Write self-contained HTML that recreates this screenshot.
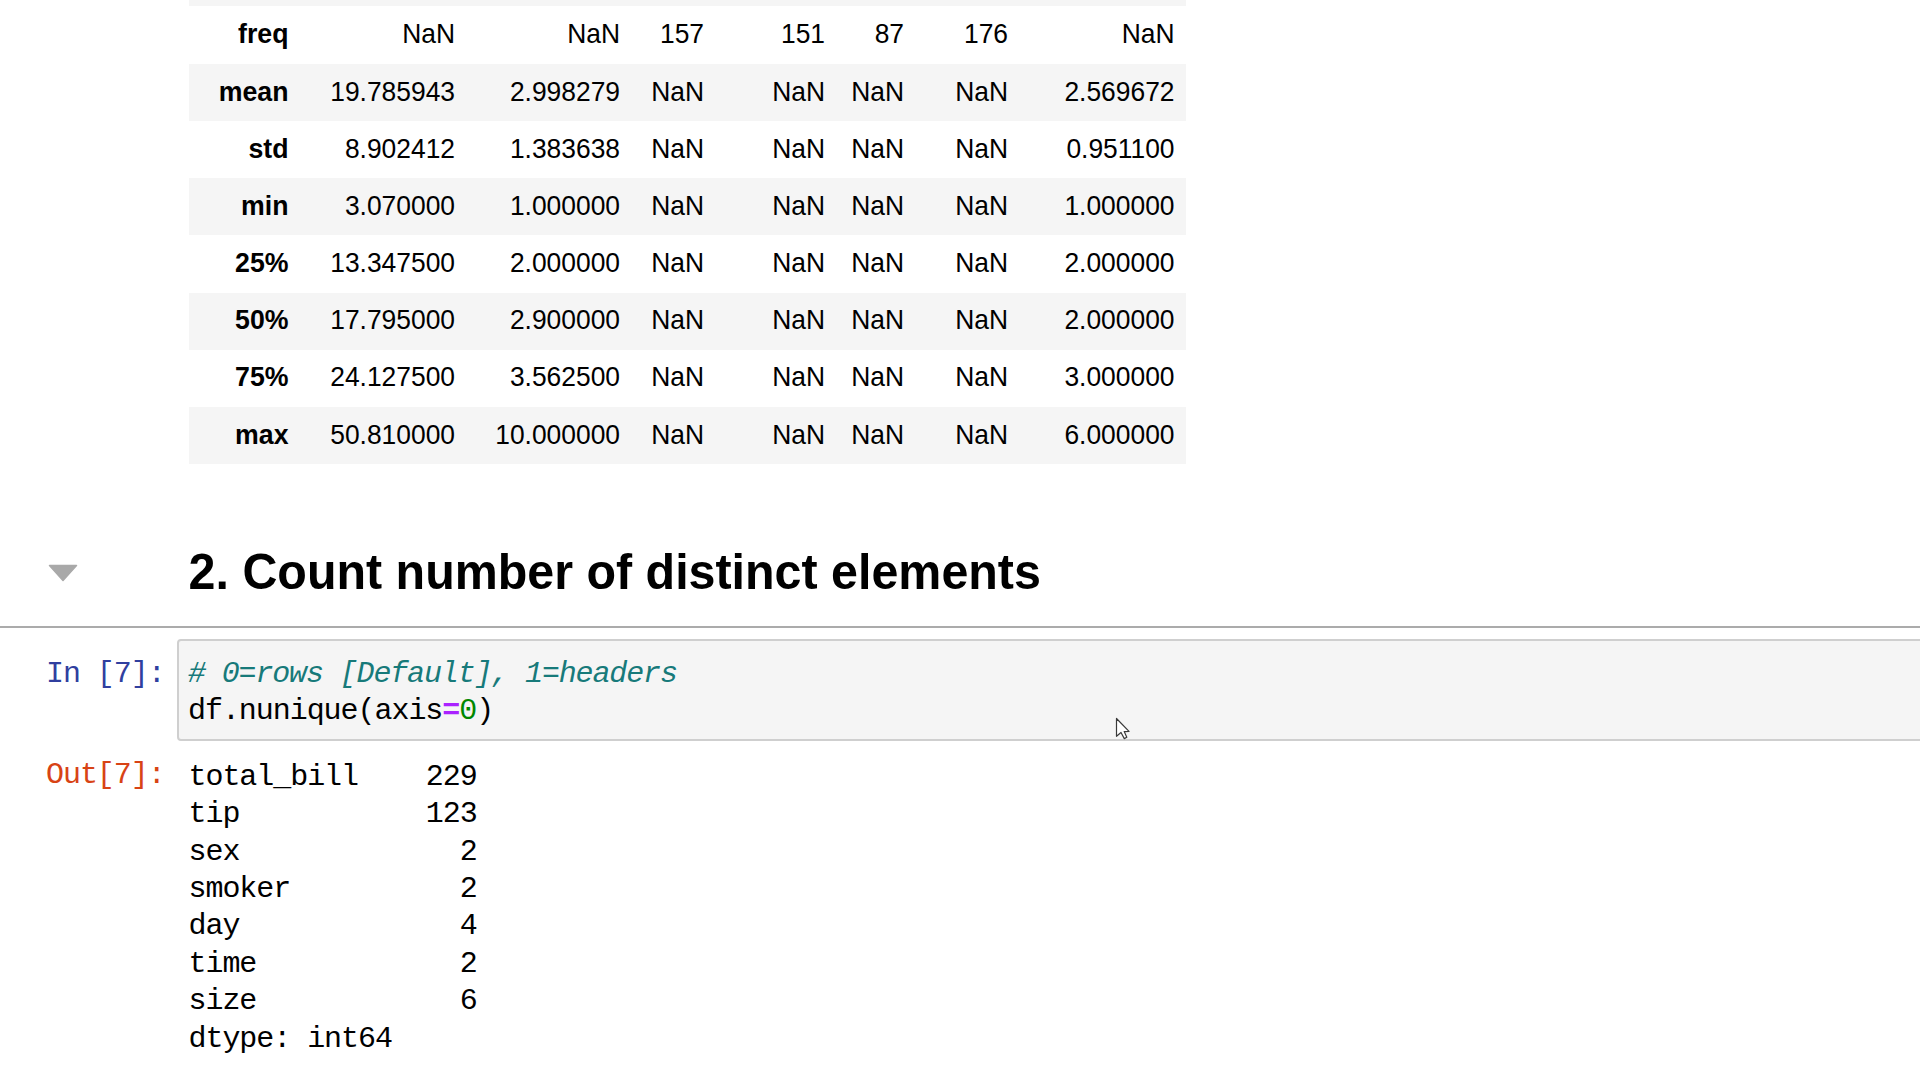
<!DOCTYPE html>
<html><head><meta charset="utf-8">
<style>
html,body{margin:0;padding:0;background:#fff;width:1920px;height:1080px;overflow:hidden;position:relative;}
.a{position:absolute;white-space:pre;}
.row{position:absolute;left:189px;width:997px;height:57.08px;}
.g{background:#f5f5f5;}
.t{position:absolute;font-family:"Liberation Sans",sans-serif;font-size:26.40px;color:#000;line-height:0;text-align:right;width:300px;transform:scaleY(1.04);transform-origin:0 9.15px;}
.b{font-weight:bold;font-size:26.7px;transform-origin:0 9.25px;}
.m{font-family:"Liberation Mono",monospace;font-size:30px;letter-spacing:-1.05px;line-height:0;position:absolute;white-space:pre;color:#000;}
</style></head><body>

<div class="row g" style="top:-60px;height:65.6px"></div>
<div class="row" style="top:5.60px;height:58.60px"></div>
<div class="t b" style="left:-11.50px;top:34.25px">freq</div>
<div class="t" style="left:155.00px;top:34.25px">NaN</div>
<div class="t" style="left:320.00px;top:34.25px">NaN</div>
<div class="t" style="left:404.00px;top:34.25px">157</div>
<div class="t" style="left:525.00px;top:34.25px">151</div>
<div class="t" style="left:604.00px;top:34.25px">87</div>
<div class="t" style="left:708.00px;top:34.25px">176</div>
<div class="t" style="left:874.50px;top:34.25px">NaN</div>
<div class="row g" style="top:64.20px;height:57.08px"></div>
<div class="t b" style="left:-11.50px;top:92.05px">mean</div>
<div class="t" style="left:155.00px;top:92.05px">19.785943</div>
<div class="t" style="left:320.00px;top:92.05px">2.998279</div>
<div class="t" style="left:404.00px;top:92.05px">NaN</div>
<div class="t" style="left:525.00px;top:92.05px">NaN</div>
<div class="t" style="left:604.00px;top:92.05px">NaN</div>
<div class="t" style="left:708.00px;top:92.05px">NaN</div>
<div class="t" style="left:874.50px;top:92.05px">2.569672</div>
<div class="row" style="top:121.28px;height:57.08px"></div>
<div class="t b" style="left:-11.50px;top:149.13px">std</div>
<div class="t" style="left:155.00px;top:149.13px">8.902412</div>
<div class="t" style="left:320.00px;top:149.13px">1.383638</div>
<div class="t" style="left:404.00px;top:149.13px">NaN</div>
<div class="t" style="left:525.00px;top:149.13px">NaN</div>
<div class="t" style="left:604.00px;top:149.13px">NaN</div>
<div class="t" style="left:708.00px;top:149.13px">NaN</div>
<div class="t" style="left:874.50px;top:149.13px">0.951100</div>
<div class="row g" style="top:178.36px;height:57.08px"></div>
<div class="t b" style="left:-11.50px;top:206.21px">min</div>
<div class="t" style="left:155.00px;top:206.21px">3.070000</div>
<div class="t" style="left:320.00px;top:206.21px">1.000000</div>
<div class="t" style="left:404.00px;top:206.21px">NaN</div>
<div class="t" style="left:525.00px;top:206.21px">NaN</div>
<div class="t" style="left:604.00px;top:206.21px">NaN</div>
<div class="t" style="left:708.00px;top:206.21px">NaN</div>
<div class="t" style="left:874.50px;top:206.21px">1.000000</div>
<div class="row" style="top:235.44px;height:57.08px"></div>
<div class="t b" style="left:-11.50px;top:263.29px">25%</div>
<div class="t" style="left:155.00px;top:263.29px">13.347500</div>
<div class="t" style="left:320.00px;top:263.29px">2.000000</div>
<div class="t" style="left:404.00px;top:263.29px">NaN</div>
<div class="t" style="left:525.00px;top:263.29px">NaN</div>
<div class="t" style="left:604.00px;top:263.29px">NaN</div>
<div class="t" style="left:708.00px;top:263.29px">NaN</div>
<div class="t" style="left:874.50px;top:263.29px">2.000000</div>
<div class="row g" style="top:292.52px;height:57.08px"></div>
<div class="t b" style="left:-11.50px;top:320.37px">50%</div>
<div class="t" style="left:155.00px;top:320.37px">17.795000</div>
<div class="t" style="left:320.00px;top:320.37px">2.900000</div>
<div class="t" style="left:404.00px;top:320.37px">NaN</div>
<div class="t" style="left:525.00px;top:320.37px">NaN</div>
<div class="t" style="left:604.00px;top:320.37px">NaN</div>
<div class="t" style="left:708.00px;top:320.37px">NaN</div>
<div class="t" style="left:874.50px;top:320.37px">2.000000</div>
<div class="row" style="top:349.60px;height:57.08px"></div>
<div class="t b" style="left:-11.50px;top:377.45px">75%</div>
<div class="t" style="left:155.00px;top:377.45px">24.127500</div>
<div class="t" style="left:320.00px;top:377.45px">3.562500</div>
<div class="t" style="left:404.00px;top:377.45px">NaN</div>
<div class="t" style="left:525.00px;top:377.45px">NaN</div>
<div class="t" style="left:604.00px;top:377.45px">NaN</div>
<div class="t" style="left:708.00px;top:377.45px">NaN</div>
<div class="t" style="left:874.50px;top:377.45px">3.000000</div>
<div class="row g" style="top:406.68px;height:57.08px"></div>
<div class="t b" style="left:-11.50px;top:434.53px">max</div>
<div class="t" style="left:155.00px;top:434.53px">50.810000</div>
<div class="t" style="left:320.00px;top:434.53px">10.000000</div>
<div class="t" style="left:404.00px;top:434.53px">NaN</div>
<div class="t" style="left:525.00px;top:434.53px">NaN</div>
<div class="t" style="left:604.00px;top:434.53px">NaN</div>
<div class="t" style="left:708.00px;top:434.53px">NaN</div>
<div class="t" style="left:874.50px;top:434.53px">6.000000</div>
<div class="a" style="left:188.6px;top:571.5px;line-height:0;transform:scaleY(1.04);transform-origin:0 16.8px;font-family:'Liberation Sans',sans-serif;font-weight:bold;font-size:48.4px;color:#000">2. Count number of distinct elements</div>
<svg class="a" style="left:0;top:0" width="200" height="620"><path d="M49.5 565.5 L76.5 565.5 L63 580.5 Z" fill="#a9a9a9" stroke="#a9a9a9" stroke-width="1.5" stroke-linejoin="round"/></svg>
<div class="a" style="left:0;top:625.8px;width:1920px;height:2px;background:#ababab"></div>
<div class="a" style="left:177px;top:639px;width:1750px;height:98px;background:#f5f5f5;border:2px solid #cfcfcf;border-radius:4px;"></div>
<div class="m" style="left:46px;top:674.2px;color:#303f9f">In [7]:</div>
<div class="m" style="left:46px;top:775px;color:#d84315">Out[7]:</div>
<div class="m" style="left:188px;top:674.2px;color:#177a7a;font-style:italic;letter-spacing:-1.15px"># 0=rows [Default], 1=headers</div>
<div class="m" style="left:188px;top:710.8px">df.nunique(axis<span style="color:#aa22ff;font-weight:bold">=</span><span style="color:#008800">0</span>)</div>
<div class="m" style="left:188.5px;top:776.80px">total_bill    229</div>
<div class="m" style="left:188.5px;top:814.22px">tip           123</div>
<div class="m" style="left:188.5px;top:851.64px">sex             2</div>
<div class="m" style="left:188.5px;top:889.06px">smoker          2</div>
<div class="m" style="left:188.5px;top:926.48px">day             4</div>
<div class="m" style="left:188.5px;top:963.90px">time            2</div>
<div class="m" style="left:188.5px;top:1001.32px">size            6</div>
<div class="m" style="left:188.5px;top:1038.74px">dtype: int64</div>
<svg class="a" style="left:1110px;top:712px" width="30" height="35"><path d="M6.5 6.5 L6.5 24.3 L11 20.5 L14.3 26.6 L16.8 25.3 L14.2 19.6 L19 19.4 Z" fill="#fff" stroke="#3a3a3a" stroke-width="1.2" stroke-linejoin="round"/></svg>
</body></html>
